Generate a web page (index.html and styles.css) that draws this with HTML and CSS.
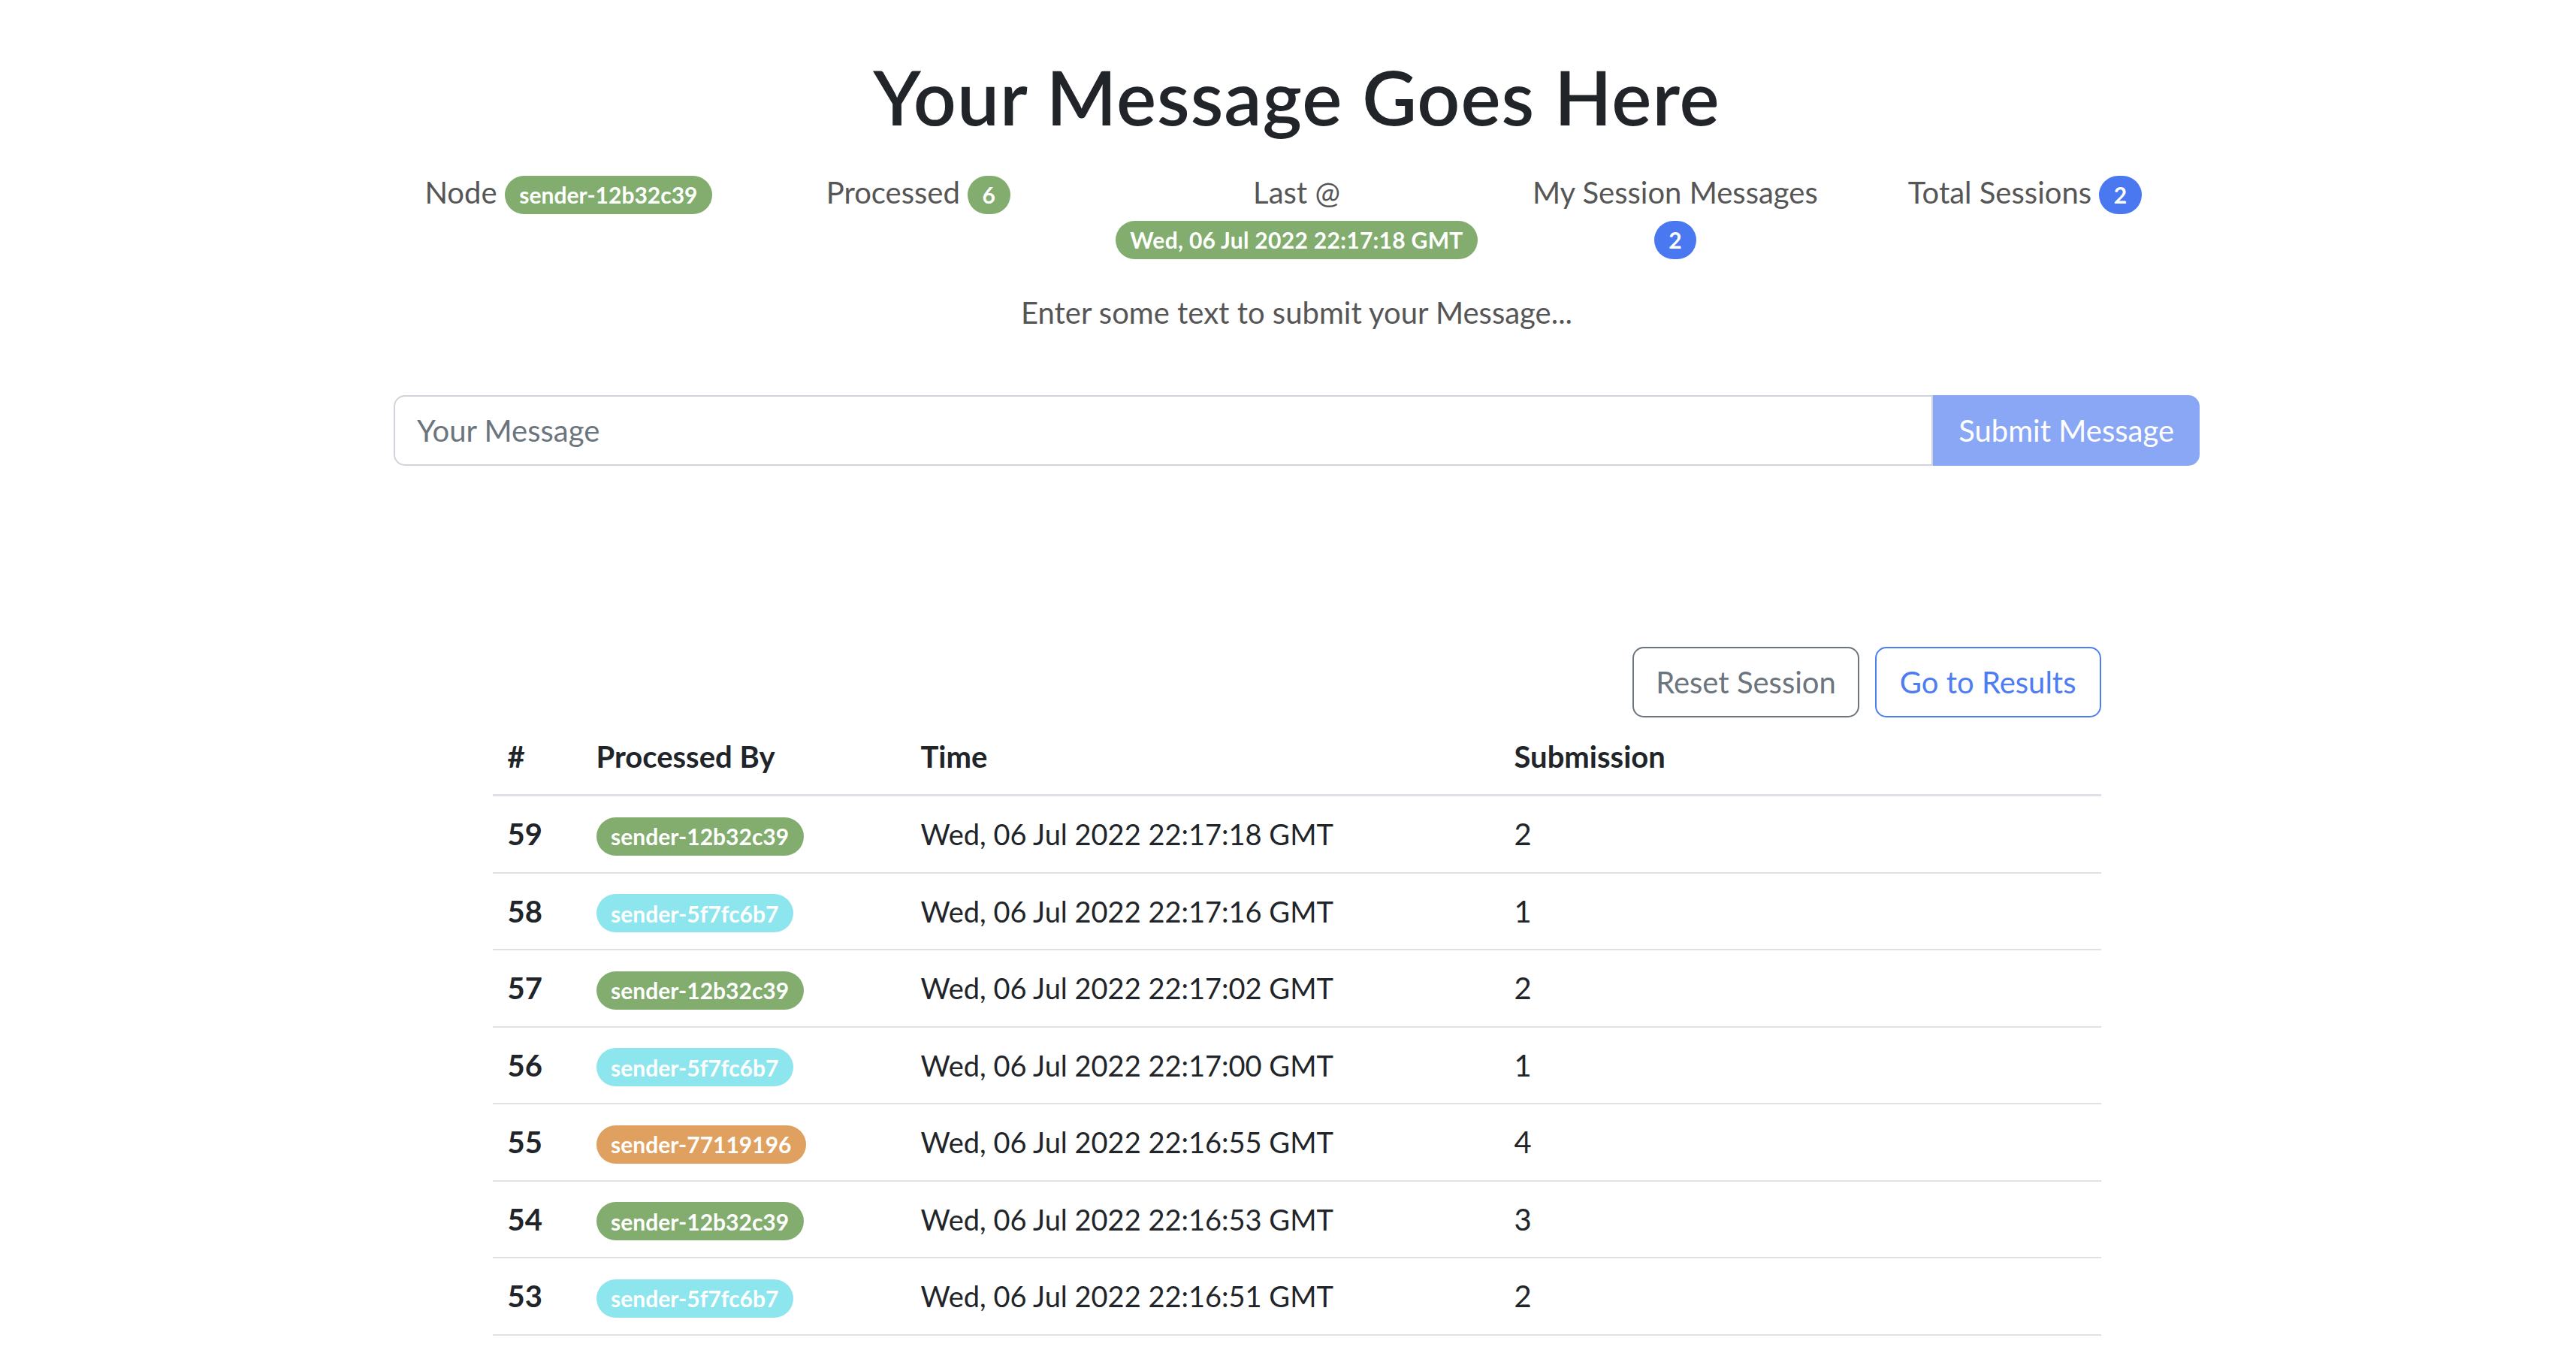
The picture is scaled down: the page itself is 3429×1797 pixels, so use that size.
FILE: index.html
```html
<!DOCTYPE html>
<html lang="en">
<head>
<meta charset="utf-8">
<title>Your Message Goes Here</title>
<link rel="stylesheet" href="styles.css">
</head>
<body>
<div class="page">
  <h1 class="title">Your Message Goes Here</h1>

  <div class="stats">
    <div class="stat">Node <span class="badge badge-green">sender-12b32c39</span></div>
    <div class="stat">Processed <span class="badge badge-green">6</span></div>
    <div class="stat">Last @<br><span class="badge badge-green badge-date">Wed, 06 Jul 2022 22:17:18 GMT</span></div>
    <div class="stat">My Session Messages<br><span class="badge badge-blue">2</span></div>
    <div class="stat">Total Sessions <span class="badge badge-blue">2</span></div>
  </div>

  <p class="hint">Enter some text to submit your Message...</p>

  <div class="input-group">
    <input class="msg-input" type="text" placeholder="Your Message">
    <button class="submit" type="button">Submit Message</button>
  </div>

  <div class="results">
    <div class="actions">
      <button class="btn btn-secondary" type="button">Reset Session</button>
      <button class="btn btn-primary" type="button">Go to Results</button>
    </div>
    <table class="table">
      <colgroup>
        <col class="c-num"><col class="c-by"><col class="c-time"><col class="c-sub">
      </colgroup>
      <thead>
        <tr><th>#</th><th>Processed By</th><th>Time</th><th>Submission</th></tr>
      </thead>
      <tbody>
        <tr><th>59</th><td><span class="badge badge-green">sender-12b32c39</span></td><td class="time">Wed, 06 Jul 2022 22:17:18 GMT</td><td>2</td></tr>
        <tr><th>58</th><td><span class="badge badge-cyan">sender-5f7fc6b7</span></td><td class="time">Wed, 06 Jul 2022 22:17:16 GMT</td><td>1</td></tr>
        <tr><th>57</th><td><span class="badge badge-green">sender-12b32c39</span></td><td class="time">Wed, 06 Jul 2022 22:17:02 GMT</td><td>2</td></tr>
        <tr><th>56</th><td><span class="badge badge-cyan">sender-5f7fc6b7</span></td><td class="time">Wed, 06 Jul 2022 22:17:00 GMT</td><td>1</td></tr>
        <tr><th>55</th><td><span class="badge badge-orange">sender-77119196</span></td><td class="time">Wed, 06 Jul 2022 22:16:55 GMT</td><td>4</td></tr>
        <tr><th>54</th><td><span class="badge badge-green">sender-12b32c39</span></td><td class="time">Wed, 06 Jul 2022 22:16:53 GMT</td><td>3</td></tr>
        <tr><th>53</th><td><span class="badge badge-cyan">sender-5f7fc6b7</span></td><td class="time">Wed, 06 Jul 2022 22:16:51 GMT</td><td>2</td></tr>
      </tbody>
    </table>
  </div>
</div>
</body>
</html>
```

FILE: styles.css
```css
html, body {
  background: #ffffff;
}

body {
  margin: 0;
  padding-left: 23px;
  font-family: Lato, "Liberation Sans", sans-serif;
  font-size: 40px;
  line-height: 1.5;
  color: #212529;
}

.page {
  width: 2404px;
  margin: 0 auto;
  padding-top: 68px;
}

.title {
  margin: 0 0 38px;
  font-size: 100px;
  line-height: 1.2;
  font-weight: 600;
  letter-spacing: 1px;
  text-align: center;
  color: #212529;
}

.stats {
  display: flex;
  margin-bottom: 40px;
}

.stat {
  flex: 1 0 0;
  padding: 0 30px;
  text-align: center;
  color: #565656;
}

.badge {
  display: inline-block;
  padding: 10.5px 19.5px;
  font-size: 30px;
  font-weight: 700;
  line-height: 1;
  color: #ffffff;
  white-space: nowrap;
  vertical-align: baseline;
  border-radius: 999px;
}

.badge-date {
  letter-spacing: 0.3px;
}

.badge-green { background: #82ad6e; }
.badge-blue { background: #4a78f0; }
.badge-cyan { background: #8de5ee; }
.badge-orange { background: #e0a060; }

.hint {
  margin: 0 0 80px;
  text-align: center;
  color: #565656;
}

.input-group {
  display: flex;
}

.msg-input {
  flex: 1;
  min-width: 0;
  box-sizing: border-box;
  height: 94px;
  margin: 0;
  padding: 15px 29px;
  font: inherit;
  line-height: 1.5;
  color: #212529;
  background: #ffffff;
  border: 2px solid #ced4da;
  border-radius: 15px 0 0 15px;
  outline: none;
}

.msg-input::placeholder {
  color: #6c757d;
}

.submit {
  box-sizing: border-box;
  height: 94px;
  margin: 0;
  padding: 15px 32px;
  font: inherit;
  line-height: 1.5;
  color: #ffffff;
  background: #8aa7f6;
  border: 2px solid #8aa7f6;
  border-radius: 0 15px 15px 0;
}

.results {
  width: 2141px;
  margin: 241px auto 0;
}

.actions {
  display: flex;
  justify-content: flex-end;
  gap: 21px;
  margin-bottom: 2px;
}

.btn {
  box-sizing: border-box;
  height: 94px;
  margin: 0;
  padding: 15px 31px;
  font: inherit;
  line-height: 1.5;
  background: #ffffff;
  border: 2px solid;
  border-radius: 15px;
}

.btn-secondary {
  padding: 15px 29px;
  color: #6c757d;
  border-color: #6c757d;
}

.btn-primary {
  color: #4d7cf3;
  border-color: #4d7cf3;
}

.table {
  width: 100%;
  table-layout: fixed;
  border-collapse: separate;
  border-spacing: 0;
  color: #212529;
}

.c-num { width: 118px; }
.c-by { width: 432px; }
.c-time { width: 790px; }
.c-sub { width: 801px; }

.table th,
.table td {
  padding: 20px 20px 20.5px;
  line-height: 60px;
  text-align: left;
  vertical-align: top;
  border-bottom: 2px solid #dee2e6;
}

.table th {
  font-weight: 700;
}

.table thead th {
  padding-bottom: 20px;
  border-bottom: 3px solid #dee2e6;
}

.table .time {
  font-size: 38px;
}
```
